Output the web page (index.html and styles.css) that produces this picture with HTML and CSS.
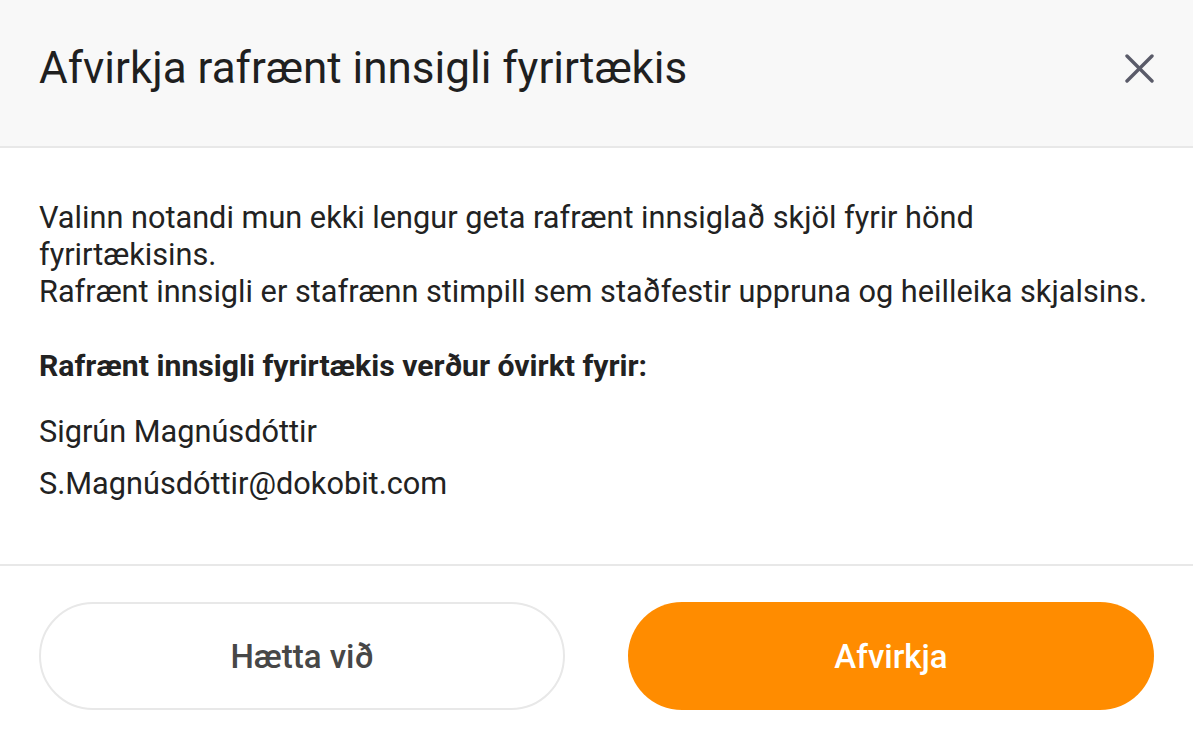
FILE: index.html
```html
<!DOCTYPE html>
<html lang="is">
<head>
<meta charset="utf-8">
<title>Afvirkja rafrænt innsigli fyrirtækis</title>
<link rel="stylesheet" href="styles.css">
</head>
<body>
<div class="modal">
  <header class="modal-header">
    <h1 class="modal-title">Afvirkja rafrænt innsigli fyrirtækis</h1>
    <button class="close-btn" aria-label="Loka">
      <svg width="29" height="29" viewBox="0 0 29 29" fill="none" stroke="#5a5b69" stroke-width="3.4" stroke-linecap="round">
        <line x1="2" y1="2" x2="27" y2="27"/>
        <line x1="27" y1="2" x2="2" y2="27"/>
      </svg>
    </button>
  </header>
  <section class="modal-body">
    <p class="intro">Valinn notandi mun ekki lengur geta rafrænt innsiglað skjöl fyrir hönd fyrirtækisins.<br>Rafrænt innsigli er stafrænn stimpill sem staðfestir uppruna og heilleika skjalsins.</p>
    <p class="label">Rafrænt innsigli fyrirtækis verður óvirkt fyrir:</p>
    <div class="user">
      <div class="user-line">Sigrún Magnúsdóttir</div>
      <div class="user-line">S.Magnúsdóttir@dokobit.com</div>
    </div>
  </section>
  <footer class="modal-footer">
    <button class="btn btn-secondary">Hætta við</button>
    <button class="btn btn-primary">Afvirkja</button>
  </footer>
</div>
</body>
</html>
```

FILE: styles.css
```css
* { box-sizing: border-box; }
html, body {
  margin: 0;
  padding: 0;
  background: #ffffff;
}
body {
  font-family: Roboto, "Liberation Sans", Arial, sans-serif;
  color: #222222;
}
.modal {
  width: 1193px;
  min-height: 732px;
  display: flex;
  flex-direction: column;
}
.modal-header {
  height: 148px;
  background: #f8f8f8;
  border-bottom: 2px solid #e8e8e8;
  padding: 42px 39px 52px 39px;
  display: flex;
  align-items: center;
  justify-content: space-between;
}
.modal-title {
  margin: 0;
  font-size: 44px;
  font-weight: 400;
  line-height: 52px;
  color: #1f1f1f;
}
.close-btn {
  width: 29px;
  height: 29px;
  padding: 0;
  border: 0;
  background: transparent;
  display: flex;
}
.modal-body {
  padding: 51px 39px 54px 39px;
  border-bottom: 2px solid #e8e8e8;
}
.intro {
  margin: 0;
  font-size: 30.7px;
  line-height: 37px;
  color: #222222;
}
.label {
  margin: 37px 0 0 0;
  font-size: 30.2px;
  line-height: 37px;
  font-weight: 700;
  color: #222222;
}
.user {
  margin-top: 22px;
}
.user-line {
  font-size: 30.7px;
  line-height: 52px;
  color: #222222;
}
.modal-footer {
  padding: 36px 39px 22px 39px;
  display: grid;
  grid-template-columns: 1fr 1fr;
  column-gap: 63px;
}
.btn {
  height: 108px;
  border-radius: 54px;
  font-family: Roboto, "Liberation Sans", Arial, sans-serif;
  font-size: 33px;
  font-weight: 500;
  cursor: pointer;
}
.btn-secondary {
  background: #ffffff;
  border: 2px solid #e8e8e8;
  color: #474747;
}
.btn-primary {
  background: #ff8c00;
  border: 0;
  color: #ffffff;
}
```
